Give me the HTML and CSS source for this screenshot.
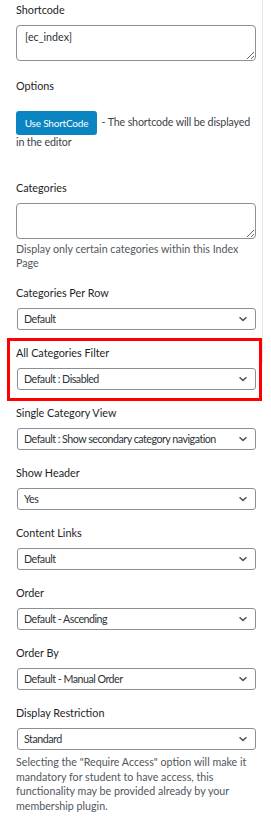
FILE: index.html
```html
<!DOCTYPE html>
<html lang="en">
<head>
  <meta charset="UTF-8">
  <title>Index Page Settings</title>
  <link rel="stylesheet" href="styles.css">
</head>
<body>
  <div class="panel">

    <!-- Shortcode -->
    <div class="field">
      <label class="label">Shortcode</label>
      <textarea class="textarea">[ec_index]</textarea>
    </div>

    <div class="field options">
      <div class="label">Options</div>
      <div class="note"><button class="btn">Use ShortCode</button> <span>- The shortcode will be displayed in the editor</span></div>
    </div>

    <!-- Categories -->
    <div class="field categories">
      <label class="label">Categories</label>
      <textarea class="textarea"></textarea>
      <p class="help">Display only certain categories within this Index Page</p>
    </div>

    <div class="field">
      <label class="label">Categories Per Row</label>
      <select class="select"><option>Default</option></select>
    </div>

    <div class="field highlight">
      <label class="label">All Categories Filter</label>
      <select class="select"><option>Default : Disabled</option></select>
    </div>

    <div class="field">
      <label class="label">Single Category View</label>
      <select class="select"><option>Default : Show secondary category navigation</option></select>
    </div>

    <div class="field">
      <label class="label">Show Header</label>
      <select class="select"><option>Yes</option></select>
    </div>

    <div class="field">
      <label class="label">Content Links</label>
      <select class="select"><option>Default</option></select>
    </div>

    <div class="field">
      <label class="label">Order</label>
      <select class="select"><option>Default - Ascending</option></select>
    </div>

    <div class="field">
      <label class="label">Order By</label>
      <select class="select"><option>Default - Manual Order</option></select>
    </div>

    <div class="field">
      <label class="label">Display Restriction</label>
      <select class="select"><option>Standard</option></select>
      <p class="help last">Selecting the "Require Access" option will make it mandatory for student to have access, this functionality may be provided already by your membership plugin.</p>
    </div>

  </div>
</body>
</html>
```

FILE: styles.css
```css
html, body {
  margin: 0;
  padding: 0;
  background: #fff;
  font-family: Lato, "Noto Sans", sans-serif;
  font-size: 10.7px;
  color: #1d2327;
}

body::after {
  content: '';
  position: absolute;
  left: 262px;
  top: 0;
  width: 1px;
  height: 363px;
  background: #e6e6e6;
}

.panel {
  width: 240px;
  padding: 1px 0 20px 16px;
  display: flex;
  flex-direction: column;
  gap: 14px;
}

.field {
  display: flex;
  flex-direction: column;
}

.label {
  display: block;
  font-size: 10.8px;
  line-height: 18px;
  margin-bottom: 6px;
}

.textarea {
  box-sizing: border-box;
  width: 240px;
  height: 36px;
  margin: 0;
  padding: 3px 8px;
  border: 1px solid #8c8f94;
  border-radius: 4px;
  font-family: inherit;
  font-size: 10.7px;
  line-height: 16px;
  color: #2c3338;
}

/* Options */
.options {
  margin-top: 2px;
}

.note {
  margin: 10px 0 0;
  line-height: 14px;
  letter-spacing: -0.15px;
  color: #3c434a;
}

.btn {
  display: inline-block;
  width: 81px;
  height: 24px;
  margin: 0 2px 0 0;
  padding: 0;
  border: 0;
  border-radius: 3px;
  background: #0a85c2;
  color: #fff;
  font-family: inherit;
  font-size: 10px;
  letter-spacing: -0.2px;
  line-height: 24px;
  vertical-align: middle;
}

.categories {
  margin-top: 16px;
}

.help {
  margin: 3px 0 0;
  line-height: 14px;
  color: #50575e;
}

.help.last {
  line-height: 14.5px;
  margin-top: 5px;
}

.select {
  box-sizing: border-box;
  width: 239px;
  height: 22px;
  margin: 0 0 0 1px;
  padding: 0 20px 0 6px;
  border: 1px solid #8c8f94;
  border-radius: 3px;
  background: #fff url("data:image/svg+xml,%3Csvg xmlns='http://www.w3.org/2000/svg' width='10' height='6' viewBox='0 0 10 6'%3E%3Cpath d='M1.5 1.2l3.5 3.2 3.5-3.2' fill='none' stroke='%2350575e' stroke-width='1.5'/%3E%3C/svg%3E") no-repeat right 7px center;
  -webkit-appearance: none;
  appearance: none;
  font-family: inherit;
  font-size: 10.7px;
  letter-spacing: -0.5px;
  line-height: 20px;
  color: #2c3338;
  white-space: nowrap;
  overflow: hidden;
  text-overflow: clip;
}

/* red outline round the highlighted setting */
.highlight {
  margin: -6px -6px -11px -9px;
  padding: 3px 3px 8px 6px;
  border: 3px solid #f00;
}
```
